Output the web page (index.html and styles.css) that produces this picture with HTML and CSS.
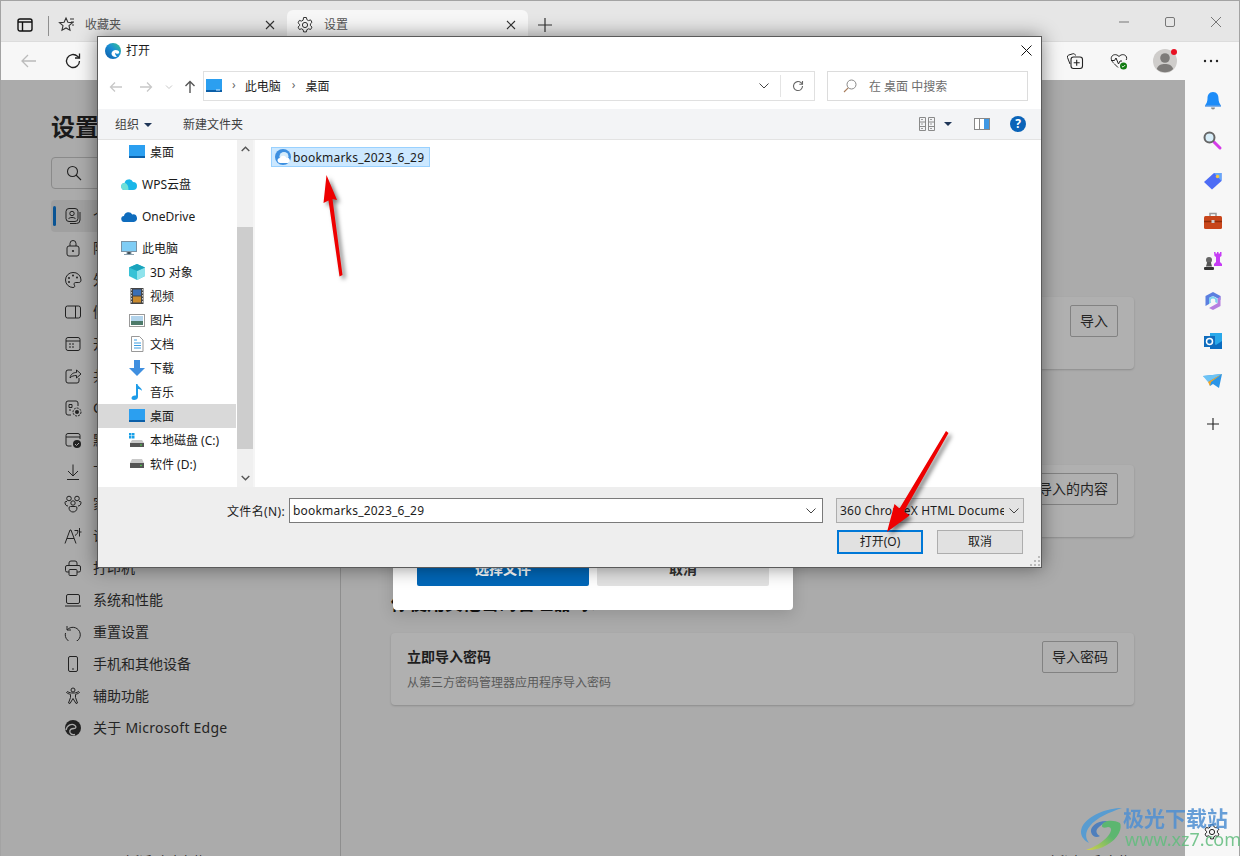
FILE: index.html
```html
<!DOCTYPE html>
<html lang="zh-CN">
<head>
  <meta charset="UTF-8" />
  <title>设置</title>
  <link rel="stylesheet" href="styles.css">
</head>
<body>
  <div class="app">
    <div class="tabbar">
      <svg class="tab-actions" width="16" height="16" viewBox="0 0 16 16"><rect x="1" y="2" width="14" height="12" rx="2" fill="none" stroke="#111" stroke-width="1.4"/><path d="M1 5h14M5.500 5v9" stroke="#111" stroke-width="1.400"/></svg>
      <span class="tab-sep"></span>
      <div class="tab">
        <svg width="18" height="18" viewBox="0 0 18 18"><path d="M8 2l1.900 4.300 4.600.4-3.500 3 1 4.500L8 11.900l-4 2.300 1-4.500-3.500-3 4.600-.4z" fill="none" stroke="#333" stroke-width="1.100"/><path d="M12 3h4M13 6h3M14 9h2" stroke="#333"/></svg>
        <span class="tab-title">收藏夹</span>
        <svg class="tab-close" width="10" height="10" viewBox="0 0 10 10"><path d="M1 1l8 8M9 1l-8 8" stroke="#333" stroke-width="1.100"/></svg>
      </div>
      <div class="tab tab-active">
        <svg width="18" height="18" viewBox="0 0 18 18"><circle cx="9" cy="9" r="2.600" fill="none" stroke="#333"/><path d="M7.600 1.500h2.800l.5 2.200 1.600.9 2.100-.7 1.400 2.400-1.600 1.500v1.800l1.600 1.500-1.400 2.400-2.100-.7-1.600.9-.5 2.200H7.600l-.5-2.200-1.600-.9-2.100.7-1.400-2.400 1.600-1.500V8.300L2 6.800l1.400-2.400 2.100.7 1.600-.9z" fill="none" stroke="#333"/></svg>
        <span class="tab-title">设置</span>
        <svg class="tab-close" width="10" height="10" viewBox="0 0 10 10"><path d="M1 1l8 8M9 1l-8 8" stroke="#333" stroke-width="1.100"/></svg>
      </div>
      <svg class="tab-new" width="16" height="16" viewBox="0 0 16 16"><path d="M8 1v14M1 8h14" stroke="#333" stroke-width="1.200"/></svg>
      <div class="win-controls">
        <svg width="12" height="12" viewBox="0 0 12 12"><path d="M1 6h10" stroke="#777"/></svg>
        <svg width="12" height="12" viewBox="0 0 12 12"><rect x="1.500" y="1.500" width="9" height="9" rx="1.500" fill="none" stroke="#777"/></svg>
        <svg width="12" height="12" viewBox="0 0 12 12"><path d="M1 1l10 10M11 1L1 11" stroke="#777"/></svg>
      </div>
    </div>

    <div class="toolbar">
      <svg class="tool-back" width="18" height="18" viewBox="0 0 18 18"><path d="M16 9H2M8 3L2 9l6 6" fill="none" stroke="#bbb" stroke-width="1.300"/></svg>
      <svg class="tool-reload" width="18" height="18" viewBox="0 0 18 18"><path d="M15.500 9a6.500 6.500 0 1 1-2-4.700L15.500 6" fill="none" stroke="#222" stroke-width="1.300"/><path d="M15.500 1.500V6H11" fill="none" stroke="#222" stroke-width="1.300"/></svg>
      <div class="tool-right">
        <svg width="18" height="18" viewBox="0 0 18 18"><path d="M4 12L1.500 5.500a2 2 0 0 1 1.300-2.500l4-1.200c1.400-.4 2.300.3 2.700 1.700" fill="none" stroke="#222"/><rect x="5" y="5" width="11.500" height="11.500" rx="2.500" fill="#f7f7f7" stroke="#222" stroke-width="1.100"/><path d="M10.700 7.800v6M7.700 10.800h6" stroke="#222" stroke-width="1.100"/></svg>
        <svg width="18" height="18" viewBox="0 0 18 18"><path d="M4 11.500C1 8.500 1 6.500 1.500 5c1-2.500 4.800-3.500 7.500-.5 2.700-3 6.500-2 7.500.5.300 1 .2 2-.3 3" fill="none" stroke="#222"/><path d="M1 8.500h3.500L6 6l2.500 6 1.500-3h2" fill="none" stroke="#222"/><path d="M4.500 12l3.500 3.500" stroke="#222"/><circle cx="13.500" cy="14" r="3.500" fill="#107c10"/><path d="M11.800 14l1.200 1.200 2.200-2.200" fill="none" stroke="#fff" stroke-width=".9"/></svg>
        <span class="avatar">
          <svg width="24" height="24" viewBox="0 0 24 24"><circle cx="12" cy="12" r="12" fill="#cfcdcb"/><circle cx="12" cy="9" r="4.800" fill="#7d7b79"/><path d="M3.800 20c1-3.700 4.500-5 8.200-5s7.200 1.300 8.200 5a12 12 0 0 1-16.400 0z" fill="#7d7b79"/></svg>
          <i class="avatar-dot"></i>
        </span>
        <svg width="18" height="18" viewBox="0 0 18 18"><circle cx="3" cy="9" r="1.200" fill="#222"/><circle cx="9" cy="9" r="1.200" fill="#222"/><circle cx="15" cy="9" r="1.200" fill="#222"/></svg>
      </div>
    </div>

    <div class="main">
      <aside class="sidebar">
        <h1 class="side-title">设置</h1>
        <div class="side-search">
          <svg width="16" height="16" viewBox="0 0 16 16"><circle cx="6.500" cy="6.500" r="5" fill="none" stroke="#222" stroke-width="1.100"/><path d="M10 10l5 5" stroke="#222" stroke-width="1.100"/></svg>
        </div>
        <ul class="side-nav">
          <li class="side-item side-item-on">
            <svg width="18" height="18" viewBox="0 0 18 18"><rect x="2" y="1.500" width="12" height="13" rx="3" fill="none" stroke="#222"/><circle cx="8" cy="6.500" r="2.200" fill="none" stroke="#222"/><path d="M4.500 12c.5-2 6.500-2 7 0M16 5v8a3.500 3.500 0 0 1-3.500 3.500H6" fill="none" stroke="#222"/></svg>
            <span>个人资料</span>
          </li>
          <li class="side-item">
            <svg width="18" height="18" viewBox="0 0 18 18"><rect x="3" y="7" width="12" height="10" rx="2" fill="none" stroke="#222"/><path d="M6 7V4.500a3 3 0 0 1 6 0V7" fill="none" stroke="#222"/><circle cx="9" cy="12" r="1.100" fill="#222"/></svg>
            <span>隐私、搜索和服务</span>
          </li>
          <li class="side-item">
            <svg width="18" height="18" viewBox="0 0 18 18"><path d="M9 1.500a7.500 7.500 0 1 0 0 15c2 0 2-1.500 1.300-2.500-.8-1.300 0-2.500 1.500-2.500h3c1.500 0 2.200-1 2.200-2.500A7.500 7.500 0 0 0 9 1.500z" fill="none" stroke="#222"/><circle cx="5" cy="7" r="1" fill="#222"/><circle cx="9" cy="4.500" r="1" fill="#222"/><circle cx="13" cy="6.500" r="1" fill="#222"/><circle cx="5" cy="11" r="1" fill="#222"/></svg>
            <span>外观</span>
          </li>
          <li class="side-item">
            <svg width="18" height="18" viewBox="0 0 18 18"><rect x="1.500" y="3" width="15" height="12" rx="2" fill="none" stroke="#222"/><path d="M11.500 3v12" stroke="#222"/></svg>
            <span>侧栏</span>
          </li>
          <li class="side-item">
            <svg width="18" height="18" viewBox="0 0 18 18"><rect x="2" y="2.500" width="14" height="13" rx="2" fill="none" stroke="#222"/><path d="M2 6h14M5 9h2M8 9h2M5 12h2M8 12h2" stroke="#222"/></svg>
            <span>开始、主页和新建标签页</span>
          </li>
          <li class="side-item">
            <svg width="18" height="18" viewBox="0 0 18 18"><path d="M8 3H4a2 2 0 0 0-2 2v9a2 2 0 0 0 2 2h9a2 2 0 0 0 2-2v-3" fill="none" stroke="#222"/><path d="M6 11c.5-4 3.500-5.500 6.500-5.500V3L17 7l-4.500 4V8.500C10 8.500 7.500 9 6 11z" fill="none" stroke="#222"/></svg>
            <span>共享、复制和粘贴</span>
          </li>
          <li class="side-item">
            <svg width="18" height="18" viewBox="0 0 18 18"><path d="M7 16H4a2 2 0 0 1-2-2V4a2 2 0 0 1 2-2h8a2 2 0 0 1 2 2v3" fill="none" stroke="#222"/><path d="M5 5.500h3v3H5zM5 11h2" fill="none" stroke="#222"/><circle cx="13" cy="13" r="2" fill="#222"/><circle cx="13" cy="13" r="4" fill="none" stroke="#222" stroke-dasharray="2 1"/></svg>
            <span>Cookie 和网站权限</span>
          </li>
          <li class="side-item">
            <svg width="18" height="18" viewBox="0 0 18 18"><path d="M7.500 15H4a2 2 0 0 1-2-2V4.500a2 2 0 0 1 2-2h10a2 2 0 0 1 2 2V8M2 6h14" fill="none" stroke="#222"/><circle cx="13" cy="13" r="4" fill="#222"/><path d="M11 13l1.500 1.500L15 12" fill="none" stroke="#ababab"/></svg>
            <span>默认浏览器</span>
          </li>
          <li class="side-item">
            <svg width="18" height="18" viewBox="0 0 18 18"><path d="M9 1.500v11M4 8l5 5 5-5M3 16.500h12" fill="none" stroke="#222"/></svg>
            <span>下载</span>
          </li>
          <li class="side-item">
            <svg width="18" height="18" viewBox="0 0 18 18"><circle cx="5" cy="3.500" r="2.300" fill="none" stroke="#222"/><circle cx="13" cy="3.500" r="2.300" fill="none" stroke="#222"/><circle cx="9" cy="8" r="2.200" fill="none" stroke="#222"/><path d="M3 6.500H2a1 1 0 0 0-1 1C1 10 2.500 11 4 11M15 6.500h1a1 1 0 0 1 1 1c0 2.500-1.500 3.500-3 3.500M5 13a1.500 1.500 0 0 1 1.500-1.500h5A1.500 1.500 0 0 1 13 13c0 2.500-2 4-4 4s-4-1.500-4-4z" fill="none" stroke="#222"/></svg>
            <span>家庭安全</span>
          </li>
          <li class="side-item">
            <svg width="18" height="18" viewBox="0 0 18 18"><path d="M1 16.500L6 3h1l5 13.500M3 11.500h7" fill="none" stroke="#222"/><path d="M10.500 3.500h3.500c0 2.500-1.200 4-3 5M15.500 1v8.500M15.500 5h2" fill="none" stroke="#222"/></svg>
            <span>语言</span>
          </li>
          <li class="side-item">
            <svg width="18" height="18" viewBox="0 0 18 18"><path d="M5 6.500V4a2 2 0 0 1 2-2h4a2 2 0 0 1 2 2v2.500M5 13H3a1.500 1.500 0 0 1-1.500-1.500V8A1.500 1.500 0 0 1 3 6.500h12A1.500 1.500 0 0 1 16.500 8v3.500A1.500 1.500 0 0 1 15 13h-2" fill="none" stroke="#222"/><rect x="5" y="10.500" width="8" height="6" rx="1" fill="none" stroke="#222"/></svg>
            <span>打印机</span>
          </li>
          <li class="side-item">
            <svg width="18" height="18" viewBox="0 0 18 18"><rect x="2.500" y="3.500" width="13" height="9" rx="1.500" fill="none" stroke="#222"/><path d="M1 15h16" stroke="#222"/></svg>
            <span>系统和性能</span>
          </li>
          <li class="side-item">
            <svg width="18" height="18" viewBox="0 0 18 18"><path d="M3 3v4h4" fill="none" stroke="#222"/><path d="M3.200 6.800A7.500 7.500 0 1 1 1.500 10" fill="none" stroke="#222"/></svg>
            <span>重置设置</span>
          </li>
          <li class="side-item">
            <svg width="18" height="18" viewBox="0 0 18 18"><rect x="4.500" y="1.500" width="9" height="15" rx="1.500" fill="none" stroke="#222"/><path d="M8 14h2" stroke="#222"/></svg>
            <span>手机和其他设备</span>
          </li>
          <li class="side-item">
            <svg width="18" height="18" viewBox="0 0 18 18"><circle cx="9" cy="3" r="2" fill="none" stroke="#222"/><path d="M2.500 5.500c2 1.500 3 1.500 4 2v3L4.500 16l1.500.5 3-5 3 5 1.500-.5-2-5.500v-3c1-.5 2-.5 4-2l-1-1c-2 1.500-3.500 1.500-5.500 1.500s-3.500 0-5.500-1.500z" fill="none" stroke="#222"/></svg>
            <span>辅助功能</span>
          </li>
          <li class="side-item">
            <svg width="18" height="18" viewBox="0 0 18 18"><circle cx="9" cy="9" r="8" fill="#222"/><path d="M2 11c1-5 6-7 9-4.500 1.500 1.300 1 3-1 3-2.500 0-5 1-4 4 .8 2 3 2.500 5 2" fill="none" stroke="#ababab" stroke-width="1.300"/></svg>
            <span class="latin">关于 Microsoft Edge</span>
          </li>
        </ul>
        <div class="side-foot">隐私和安全条款</div>
      </aside>

      <section class="content">
        <div class="card card-first">
          <div class="card-text"></div>
          <button class="card-btn">导入</button>
        </div>
        <h2 class="sec-title sec-hidden">导入浏览器数据</h2>
        <div class="card">
          <div class="card-text"></div>
          <button class="card-btn">选择要导入的内容</button>
        </div>
        <h2 class="sec-title">你使用其他密码管理器吗？</h2>
        <div class="card">
          <div class="card-text">
            <div class="card-name">立即导入密码</div>
            <div class="card-desc">从第三方密码管理器应用程序导入密码</div>
          </div>
          <button class="card-btn">导入密码</button>
        </div>
        <div class="content-foot">隐私声明和条款</div>

        <div class="modal">
          <button class="modal-btn modal-btn-main">选择文件</button>
          <button class="modal-btn">取消</button>
        </div>
      </section>

      <aside class="rail">
        <svg class="rail-icon" width="20" height="20" viewBox="0 0 20 20"><path d="M10 1c4 0 5.500 3 5.500 6.500 0 3 1 5 2.500 7H2c1.500-2 2.500-4 2.500-7C4.500 4 6 1 10 1z" fill="#1d8cf8"/><path d="M2 14.500h16v1H2z" fill="#0b6fe0"/><path d="M8 16.500h4a2 2 0 0 1-4 0z" fill="#888"/></svg>
        <svg class="rail-icon" width="20" height="20" viewBox="0 0 20 20"><path d="M11 11l6 6" stroke="#d53be8" stroke-width="3" stroke-linecap="round"/><circle cx="6.500" cy="6.500" r="5" fill="#d8eef9" stroke="#666" stroke-width="2"/></svg>
        <svg class="rail-icon" width="20" height="20" viewBox="0 0 20 20"><path d="M1 11L11 2h7.500v8L9 18.500z" fill="#4d6cf5"/><path d="M11 2h7.500v8z" fill="#66a8f8"/><circle cx="14.500" cy="5.500" r="1.700" fill="#f5c542"/></svg>
        <svg class="rail-icon" width="20" height="20" viewBox="0 0 20 20"><path d="M7 5V2.500h6V5" fill="none" stroke="#999" stroke-width="1.500"/><rect x="1" y="5" width="18" height="13" rx="1.500" fill="#c8451a"/><path d="M1 10.500h18" stroke="#8f2c0b" stroke-width="1.500"/><rect x="8.500" y="9" width="3" height="3" fill="#ccc"/></svg>
        <svg class="rail-icon" width="20" height="20" viewBox="0 0 20 20"><path d="M11 1h1.500v1.500H14V1h1.500v1.500H17V1h1.500v4l-1.500 1v5l2 2v2h-8v-2l2-2V6l-1.500-1z" fill="#c63cf5"/><circle cx="6" cy="9" r="3" fill="#666"/><path d="M4.200 11h3.600l1.200 4.500H3z" fill="#555"/><rect x="1" y="16" width="10" height="3" rx="1" fill="#333"/></svg>
        <svg class="rail-icon" width="20" height="20" viewBox="0 0 20 20"><path d="M10 1l7.500 4v4l-5-2.800L10 5 6 7v6L2.500 15V5z" fill="#5b7fe0"/><path d="M17.500 5v10L10 19l-4-2 5-2.800 3.500-2V8z" fill="#b67fe0"/><path d="M6 7l4-2 4.500 3v4.200L10 10 6 13z" fill="#7fd3f0"/><circle cx="10" cy="10" r="2.400" fill="#f7f7f7"/></svg>
        <svg class="rail-icon" width="20" height="20" viewBox="0 0 20 20"><path d="M7 2h12v16H7z" fill="#28a8ea"/><path d="M7 10l6 4 6-4v8H7z" fill="#0a6cc0"/><rect x="1" y="5" width="11" height="11" fill="#0f6cbd"/><circle cx="6.500" cy="10.500" r="3" fill="none" stroke="#fff" stroke-width="1.500"/></svg>
        <svg class="rail-icon" width="20" height="20" viewBox="0 0 20 20"><path d="M0 5l19-2-3 14-6-4-3 2-2-6z" fill="#2a95e8"/><path d="M0 5l19-2-14 8z" fill="#6cc3f5"/><path d="M19 3L5 11l2 4 1-4z" fill="#f5a623"/></svg>
        <svg class="rail-icon rail-plus" width="14" height="14" viewBox="0 0 14 14"><path d="M7 1v12M1 7h12" stroke="#222" stroke-width="1.100"/></svg>
        <svg class="rail-gear" width="18" height="18" viewBox="0 0 18 18"><circle cx="9" cy="9" r="2.600" fill="none" stroke="#222"/><path d="M7.600 1.500h2.800l.5 2.200 1.600.9 2.100-.7 1.400 2.400-1.600 1.500v1.800l1.600 1.500-1.400 2.400-2.100-.7-1.600.9-.5 2.200H7.600l-.5-2.200-1.600-.9-2.100.7-1.400-2.400 1.600-1.500V8.300L2 6.800l1.400-2.400 2.100.7 1.600-.9z" fill="none" stroke="#222"/></svg>
      </aside>
    </div>
  </div>

  <!-- 打开文件对话框 -->
  <div class="dialog">
    <div class="dlg-title">
      <svg width="16" height="16" viewBox="0 0 16 16"><defs><linearGradient id="edgeFill" x1="1" y1="0" x2="0" y2="1"><stop offset="0" stop-color="#39c78a"/><stop offset=".45" stop-color="#1b8fd6"/><stop offset="1" stop-color="#0c59a4"/></linearGradient></defs><circle cx="8" cy="8" r="8" fill="url(#edgeFill)"/><path d="M6.500 10.500c.3-3 4-4.500 6.500-3 1.500 1 1.500 2.500.5 3-1.500.7-2.500 0-3-.7-.7.5-.3 2.500 1.500 4-3 .5-5.700-1-5.500-3.300z" fill="#fff"/></svg>
      <span>打开</span>
      <svg class="dlg-close" width="11" height="11" viewBox="0 0 11 11"><path d="M.5.500l10 10M10.500.500l-10 10" stroke="#111"/></svg>
    </div>

    <div class="dlg-nav">
      <div class="nav-arrows">
        <svg width="14" height="14" viewBox="0 0 14 14"><path d="M13 7H1.500M6 2.500L1.500 7 6 11.500" fill="none" stroke="#c8c8c8" stroke-width="1.300"/></svg>
        <svg width="14" height="14" viewBox="0 0 14 14"><path d="M1 7h11.500M8 2.500L12.500 7 8 11.500" fill="none" stroke="#c8c8c8" stroke-width="1.300"/></svg>
        <svg class="nav-down" width="8" height="8" viewBox="0 0 8 8"><path d="M1 2.500l3 3 3-3" fill="none" stroke="#c8c8c8"/></svg>
        <svg width="14" height="14" viewBox="0 0 14 14"><path d="M7 13V1.500M2.500 6L7 1.500 11.500 6" fill="none" stroke="#555" stroke-width="1.400"/></svg>
      </div>
      <div class="addr">
        <svg width="16" height="14" viewBox="0 0 16 14"><rect width="16" height="12" fill="#2b9ff0"/><rect y="11" width="16" height="2" fill="#0b5fa8"/><path d="M10 11h4" stroke="#cfe9ff"/></svg>
        <span class="crumb-sep">›</span>
        <span class="crumb">此电脑</span>
        <span class="crumb-sep">›</span>
        <span class="crumb">桌面</span>
        <svg class="addr-chev" width="10" height="6" viewBox="0 0 10 6"><path d="M.5.500L5 5l4.500-4.500" fill="none" stroke="#444"/></svg>
        <span class="addr-div"></span>
        <svg class="addr-reload" width="12" height="12" viewBox="0 0 12 12"><path d="M10.500 6A4.500 4.500 0 1 1 9 2.700L10.500 4" fill="none" stroke="#666" stroke-width="1.100"/><path d="M10.500 1v3.200H7.300" fill="none" stroke="#666" stroke-width="1.100"/></svg>
      </div>
      <div class="dlg-search">
        <svg width="14" height="14" viewBox="0 0 14 14"><circle cx="8.500" cy="5.500" r="4.500" fill="none" stroke="#888"/><path d="M5.200 8.800L1 13" stroke="#a87b5a" stroke-width="1.100"/></svg>
        <span>在 桌面 中搜索</span>
      </div>
    </div>

    <div class="dlg-tools">
      <span class="tool-text">组织<i class="caret"></i></span>
      <span class="tool-text tool-new">新建文件夹</span>
      <div class="tools-right">
        <svg width="16" height="16" viewBox="0 0 16 16"><path d="M.5 1.500h6v13h-6zM9.500 1.500h6v13h-6zM.5 6h6M.5 10.500h6M9.500 6h6M9.500 10.500h6" fill="none" stroke="#8a8a8a"/><path d="M2.500 3.500h1M2.500 8h1M2.500 12.500h1M11.500 3.500h1M11.500 8h1M11.500 12.500h1" stroke="#444"/></svg>
        <i class="caret caret-view"></i>
        <svg class="pane-icon" width="16" height="12" viewBox="0 0 16 12"><rect x=".5" y=".5" width="15" height="11" fill="#fff" stroke="#888"/><rect x="10" y="1" width="5" height="10" fill="#3f97e3"/><path d="M5.500 1v10" stroke="#888"/></svg>
        <span class="help">?</span>
      </div>
    </div>

    <div class="dlg-body">
      <ul class="tree">
        <li class="tree-row tree-sub">
          <svg width="16" height="14" viewBox="0 0 16 14"><rect width="16" height="12" fill="#2b9ff0"/><rect y="11" width="16" height="2" fill="#0b5fa8"/></svg>
          <span>桌面</span>
        </li>
        <li class="tree-row tree-top">
          <svg width="16" height="12" viewBox="0 0 16 12"><path d="M4 12a3.500 3.500 0 0 1-.5-7 4.500 4.500 0 0 1 8.500-1 4 4 0 0 1 0 8z" fill="#19b6e8"/><path d="M4 12a3.500 3.500 0 0 1-.5-7c2 0 4 2 4 7z" fill="#6fe0d8"/></svg>
          <span>WPS云盘</span>
        </li>
        <li class="tree-row tree-top">
          <svg width="16" height="11" viewBox="0 0 16 11"><path d="M3.500 11A3 3 0 0 1 3 5a4.500 4.500 0 0 1 8.300-1.500A3.800 3.800 0 0 1 13 11z" fill="#0f6cbd"/></svg>
          <span>OneDrive</span>
        </li>
        <li class="tree-row tree-top">
          <svg width="16" height="15" viewBox="0 0 16 15"><rect x=".5" y=".5" width="15" height="10" fill="#7fcdf5" stroke="#7a93a5"/><path d="M6 11h4v2H6zM3 13.500h10" stroke="#8aa0ae"/></svg>
          <span>此电脑</span>
        </li>
        <li class="tree-row tree-sub">
          <svg width="16" height="16" viewBox="0 0 16 16"><path d="M8 0l8 3.500V12l-8 4-8-4V3.500z" fill="#37c2d6"/><path d="M8 7l8-3.500V12l-8 4z" fill="#8fe3ec"/><path d="M8 0l8 3.500L8 7 0 3.500z" fill="#1ba3bc"/></svg>
          <span>3D 对象</span>
        </li>
        <li class="tree-row tree-sub">
          <svg width="16" height="16" viewBox="0 0 16 16"><rect x="1.500" width="13" height="16" fill="#444"/><rect x="4" y="1.500" width="8" height="6" fill="#3b6fb5"/><rect x="4" y="8.500" width="8" height="6" fill="#c98a2e"/><path d="M2.500 1v14M13.500 1v14" stroke="#ccc" stroke-dasharray="1.500 1.500"/></svg>
          <span>视频</span>
        </li>
        <li class="tree-row tree-sub">
          <svg width="16" height="13" viewBox="0 0 16 13"><rect x=".5" y=".5" width="15" height="12" fill="#fff" stroke="#999"/><rect x="2" y="2" width="12" height="5" fill="#b3d4ec"/><rect x="2" y="7" width="12" height="4" fill="#4d7a6a"/></svg>
          <span>图片</span>
        </li>
        <li class="tree-row tree-sub">
          <svg width="14" height="16" viewBox="0 0 14 16"><path d="M1.500.500h8l3.500 3.500v11.500H1.500z" fill="#fff" stroke="#999"/><path d="M4 4h3M4 7h7M4 9.500h7M4 12h7" stroke="#3c9ce0"/></svg>
          <span>文档</span>
        </li>
        <li class="tree-row tree-sub">
          <svg width="16" height="16" viewBox="0 0 16 16"><path d="M5 0h6v8h5l-8 8-8-8h5z" fill="#3f8fe0"/></svg>
          <span>下载</span>
        </li>
        <li class="tree-row tree-sub">
          <svg width="14" height="16" viewBox="0 0 14 16"><path d="M6 0h1.500c.3 3 4.500 3.500 4.500 7-1-1.500-3-2-4-2v8c0 2-2 3-4 3-1.500 0-2.500-.8-2.500-2 0-1.500 2-3 4.500-2.500z" fill="#1e9ce8"/></svg>
          <span>音乐</span>
        </li>
        <li class="tree-row tree-sub tree-on">
          <svg width="16" height="14" viewBox="0 0 16 14"><rect width="16" height="12" fill="#2b9ff0"/><rect y="11" width="16" height="2" fill="#0b5fa8"/></svg>
          <span>桌面</span>
        </li>
        <li class="tree-row tree-sub">
          <svg width="16" height="14" viewBox="0 0 16 14"><path d="M0 0h2.500v2.500H0zM3 0h2.500v2.500H3zM0 3h2.500v2.500H0zM3 3h2.500v2.500H3z" fill="#18a0e8"/><path d="M3 7h10l2 3H1z" fill="#c9c9c9"/><rect x="1" y="10" width="14" height="4" fill="#555"/><circle cx="12" cy="12" r=".8" fill="#4ce24c"/></svg>
          <span>本地磁盘 (C:)</span>
        </li>
        <li class="tree-row tree-sub">
          <svg width="16" height="10" viewBox="0 0 16 10"><path d="M3 0h10l2 4H1z" fill="#c9c9c9"/><rect x="1" y="4" width="14" height="5" fill="#555"/><circle cx="12" cy="6.500" r=".8" fill="#4ce24c"/></svg>
          <span>软件 (D:)</span>
        </li>
      </ul>
      <div class="scroll">
        <svg class="scroll-arrow" width="9" height="6" viewBox="0 0 9 6"><path d="M.7 5L4.500 1.200 8.300 5" fill="none" stroke="#555" stroke-width="1.400"/></svg>
        <div class="scroll-track"><div class="scroll-thumb"></div></div>
        <svg class="scroll-arrow" width="9" height="6" viewBox="0 0 9 6"><path d="M.7 1l3.800 3.800L8.300 1" fill="none" stroke="#555" stroke-width="1.400"/></svg>
      </div>
      <div class="files">
        <div class="file-item">
          <svg width="16" height="16" viewBox="0 0 16 16"><circle cx="8" cy="8" r="8" fill="#3d8fe0"/><circle cx="9" cy="7.500" r="4.500" fill="#d5ecfb"/><path d="M5 14a2.500 2.500 0 0 1 0-5 3.500 3.500 0 0 1 6.500 0 2.500 2.500 0 0 1 1.500 5z" fill="#fff"/></svg>
          <span>bookmarks_2023_6_29</span>
        </div>
      </div>
    </div>

    <div class="dlg-foot">
      <div class="foot-row">
        <label class="foot-label">文件名(N):</label>
        <div class="foot-input">
          <span>bookmarks_2023_6_29</span>
          <svg width="10" height="6" viewBox="0 0 10 6"><path d="M.5.500L5 5l4.500-4.500" fill="none" stroke="#444"/></svg>
        </div>
        <div class="foot-filter">
          <span>360 ChromeX HTML Document</span>
          <svg width="10" height="6" viewBox="0 0 10 6"><path d="M.5.500L5 5l4.500-4.500" fill="none" stroke="#444"/></svg>
        </div>
      </div>
      <div class="foot-row foot-actions">
        <button class="dlg-btn dlg-btn-on">打开(O)</button>
        <button class="dlg-btn">取消</button>
      </div>
      <svg class="grip" width="10" height="10" viewBox="0 0 10 10"><path d="M8 0h2v2H8zM4 4h2v2H4zM8 4h2v2H8zM0 8h2v2H0zM4 8h2v2H4zM8 8h2v2H8z" fill="#bbb"/></svg>
    </div>
  </div>

  <!-- 截图上的红色箭头 -->
  <svg class="arrows" width="1240" height="856" viewBox="0 0 1240 856">
    <path d="M326.500 175L337 200 332.500 199 342.500 275 339.500 276.500 328.500 200.500 323.500 203z" fill="#ee0000"/>
    <path d="M887 532L894.500 504 899.500 508.500 946 431 948.500 433 904 511.500 909.500 515.500z" fill="#ee0000"/>
  </svg>

  <!-- 水印 -->
  <div class="watermark">
    <svg width="44" height="44" viewBox="0 0 44 44"><defs><linearGradient id="wmGreen" x1="1" y1="0" x2="0" y2="1"><stop offset=".4" stop-color="#4fb866"/><stop offset="1" stop-color="#dcd83a"/></linearGradient></defs><path d="M42 1C28 1 8 8 2 20c-3 7 1 13 7 16-4-5-4-11 1-17C16 11 30 5 42 1z" fill="#4a9ad8"/><path d="M28 14c-10-1-18 5-17 11 1 5 6 6 9 4-4-2-5-6-1-9 3-3 7-5 9-6z" fill="#3f78c0"/><path d="M40 16c-8-4-18-2-18 3 0 2 3 2 6 1 4 0 4 4 0 9-5 6-13 11-22 14 14 1 28-7 33-17 2-4 2-8 1-10z" fill="url(#wmGreen)"/></svg>
    <div class="wm-text">
      <div class="wm-name">极光下载站</div>
      <div class="wm-url">www.xz7.com</div>
    </div>
  </div>
</body>
</html>
```

FILE: styles.css
```css
:root {
  --page: #ababab;
  --card: #b0b0b0;
  --bar: #f7f7f7;
  --ink: #1d1d1d;
}

* {
  box-sizing: border-box;
}

html, body {
  margin: 0;
  height: 100%;
  overflow: hidden;
}

body {
  font-family: "Noto Sans", "Noto Sans CJK SC", sans-serif;
  font-size: 12px;
  color: var(--ink);
}

ul {
  list-style: none;
  margin: 0;
  padding: 0;
}

/* browser frame */
.app {
  width: 1240px;
  height: 856px;
  display: flex;
  flex-direction: column;
  border: 1px solid #a3a3a3;
  border-bottom: none;
  overflow: hidden;
}

.tabbar {
  height: 40px;
  flex: none;
  background: #e6e6e6;
  display: flex;
  align-items: flex-end;
  padding-left: 16px;
  position: relative;
}

.tab-actions {
  margin-bottom: 8px;
}

.tab-sep {
  width: 1px;
  height: 20px;
  background: #8f8f8f;
  margin: 0 0 5px 15px;
}

.tab {
  width: 241px;
  height: 31px;
  display: flex;
  align-items: center;
  padding: 0 12px 2px 9px;
  color: #555;
  font-size: 12px;
}

.tab:not(.tab-active) {
  width: 238px;
}

.tab-active {
  background: #f7f7f7;
  border-radius: 6px 6px 0 0;
  color: #555;
}

.tab-title {
  margin-left: 9px;
  flex: 1;
  line-height: 16px;
}

.tab-active .tab-title {
  margin-left: 10px;
}

.tab-new {
  margin: 0 0 8px 9px;
}

.win-controls {
  position: absolute;
  top: 15px;
  right: 17px;
  display: flex;
  gap: 34px;
}

.toolbar {
  height: 39px;
  flex: none;
  background: var(--bar);
  display: flex;
  align-items: center;
  border-top: 1px solid #dcdcdc;
}

.tool-back {
  margin-left: 19px;
}

.tool-reload {
  margin-left: 26px;
}

.tool-right {
  margin-left: auto;
  display: flex;
  align-items: center;
  gap: 26px;
  padding-right: 19px;
}

.avatar {
  position: relative;
  width: 24px;
  height: 24px;
  margin: 0 -1px;
}

.avatar-dot {
  position: absolute;
  top: 0;
  right: 0;
  width: 6px;
  height: 6px;
  border-radius: 50%;
  background: #e81123;
}

/* settings page, dimmed by the dialog */
.main {
  flex: 1;
  min-height: 0;
  display: flex;
  background: var(--page);
}

.sidebar {
  width: 340px;
  flex: none;
  border-right: 1px solid #8e8e8e;
  padding: 30px 0 0 50px;
}

.side-title {
  margin: 0;
  font-size: 24px;
  line-height: 34px;
  font-weight: 700;
  color: #1a1a1a;
}

.side-search {
  margin-top: 13px;
  width: 270px;
  height: 32px;
  border: 1px solid #8a8a8a;
  border-radius: 4px;
  display: flex;
  align-items: center;
  padding-left: 14px;
}

.side-nav {
  margin-top: 11px;
}

.side-item {
  height: 32px;
  display: flex;
  align-items: center;
  gap: 11px;
  padding-left: 13px;
  font-size: 14px;
  line-height: 20px;
  color: #242424;
  border-radius: 4px;
  position: relative;
  width: 270px;
}

.side-item svg {
  flex: none;
}

.latin {
  letter-spacing: 0.25px;
}

.side-item-on {
  background: #a0a0a0;
}

.side-item-on::before {
  content: "";
  position: absolute;
  left: 2px;
  top: 6px;
  width: 3px;
  height: 20px;
  border-radius: 2px;
  background: #0a5494;
}

.side-foot {
  margin-top: 109px;
  padding-left: 70px;
  font-size: 12px;
  line-height: 18px;
  color: #222;
}

.content {
  flex: 1;
  min-width: 0;
  padding: 217px 51px 0 50px;
  position: relative;
}

.card {
  height: 72px;
  background: var(--card);
  border-radius: 4px;
  box-shadow: 0 1px 2px rgba(0, 0, 0, 0.18);
  display: flex;
  justify-content: space-between;
  padding: 8px 16px;
}

.card-name {
  margin-top: 6px;
  font-size: 14px;
  line-height: 20px;
  font-weight: 700;
}

.card-desc {
  margin-top: 7px;
  font-size: 12px;
  line-height: 18px;
  color: #595959;
}

.card-btn {
  height: 32px;
  padding: 0 9px 2px;
  font: inherit;
  font-size: 14px;
  color: #242424;
  background: transparent;
  border: 1px solid #828282;
  border-radius: 2px;
}

.sec-title {
  margin: 0;
  height: 96px;
  padding-top: 54px;
  font-size: 18px;
  line-height: 24px;
  font-weight: 700;
  color: #111;
}

.sec-hidden {
  color: transparent;
}

.content-foot {
  margin-top: 148px;
  padding-right: 4px;
  text-align: right;
  font-size: 12px;
  line-height: 18px;
  color: #222;
}

.modal {
  position: absolute;
  left: 52px;
  top: 300px;
  width: 400px;
  height: 230px;
  background: #fff;
  border-radius: 4px;
  box-shadow: 0 4px 16px rgba(0, 0, 0, 0.15);
  display: flex;
  align-items: flex-end;
  gap: 8px;
  padding: 0 24px 24px;
}

.modal-btn {
  width: 172px;
  height: 36px;
  border: none;
  border-radius: 2px;
  font: inherit;
  font-size: 14px;
  font-weight: 700;
  color: #333;
  background: #e2e2e2;
}

.modal-btn-main {
  background: #0067b8;
  color: #fff;
}

.rail {
  width: 54px;
  flex: none;
  background: var(--bar);
  display: flex;
  flex-direction: column;
  align-items: center;
  padding: 11px 0 15px;
}

.rail-icon {
  margin-bottom: 20px;
  margin-left: 1px;
}

.rail-plus {
  margin-top: 6px;
}

.rail-gear {
  margin-top: auto;
}

/* open file dialog */
.dialog {
  position: absolute;
  left: 97px;
  top: 36px;
  width: 945px;
  height: 532px;
  background: #fff;
  border: 1px solid #5a5a5a;
  box-shadow: 0 0 18px rgba(0, 0, 0, 0.45);
  display: flex;
  flex-direction: column;
}

.dlg-title {
  height: 34px;
  flex: none;
  display: flex;
  align-items: center;
  gap: 5px;
  padding: 0 9px 7px 7px;
  font-size: 12px;
  line-height: 16px;
}

.dlg-close {
  margin-left: auto;
}

.dlg-nav {
  height: 38px;
  flex: none;
  display: flex;
  gap: 12px;
  align-items: flex-start;
}

.nav-arrows {
  width: 105px;
  margin-right: -12px;
  height: 30px;
  flex: none;
  display: flex;
  align-items: center;
  padding: 2px 0 0 11px;
}

.nav-arrows svg:nth-child(2) {
  margin-left: 16px;
}

.nav-down {
  margin-left: 12px;
}

.nav-arrows svg:nth-child(4) {
  margin-left: 10px;
}

.addr {
  width: 612px;
  height: 30px;
  flex: none;
  border: 1px solid #e0e0e0;
  display: flex;
  align-items: center;
  padding-left: 2px;
  font-size: 12px;
  line-height: 16px;
}

.crumb {
  padding-top: 1px;
}

.crumb-sep {
  margin: 0 9px 2px 10px;
  color: #666;
}

.crumb + .crumb-sep {
  margin: 0 10px 2px 11px;
}

.addr-chev {
  margin-left: auto;
}

.addr-div {
  width: 1px;
  height: 22px;
  background: #e4e4e4;
  margin: 0 11px 0 11px;
}

.addr-reload {
  margin-right: 10px;
}

.dlg-search {
  width: 201px;
  height: 30px;
  flex: none;
  border: 1px solid #dcdcdc;
  display: flex;
  align-items: center;
  gap: 12px;
  padding-left: 15px;
  color: #6d6d6d;
  font-size: 12px;
  line-height: 16px;
}

.dlg-search span {
  padding-top: 2px;
}

.dlg-tools {
  height: 31px;
  flex: none;
  background: #f3f4f6;
  border-bottom: 1px solid #e3e3e3;
  display: flex;
  align-items: center;
  padding-left: 17px;
  color: #3f3f3f;
  line-height: 16px;
}

.tool-text {
  padding-top: 2px;
}

.tool-new {
  margin-left: 31px;
}

.caret {
  display: inline-block;
  width: 0;
  height: 0;
  margin-left: 5px;
  vertical-align: 2px;
  border: 4px solid transparent;
  border-top: 4px solid #1f3557;
  border-bottom: none;
}

.tools-right {
  margin-left: auto;
  display: flex;
  align-items: center;
  padding-right: 15px;
}

.caret-view {
  margin-left: 9px;
}

.pane-icon {
  margin-left: 22px;
}

.help {
  width: 16px;
  height: 16px;
  margin-left: 20px;
  border-radius: 50%;
  background: #0a63b8;
  color: #fff;
  font-size: 12px;
  line-height: 16px;
  font-weight: 700;
  text-align: center;
}

.dlg-body {
  flex: 1;
  min-height: 0;
  display: flex;
}

.tree {
  width: 139px;
  flex: none;
  overflow: hidden;
  padding-right: 1px;
}

.tree-row {
  height: 24px;
  display: grid;
  grid-template-columns: 16px 1fr;
  column-gap: 5px;
  align-items: center;
  justify-items: center;
  line-height: 16px;
  font-size: 12px;
  color: #1a1a1a;
  white-space: nowrap;
}

.tree-row span {
  justify-self: start;
  padding-top: 2px;
}

.tree-top {
  margin-top: 8px;
  padding-left: 23px;
}

.tree-sub {
  padding-left: 31px;
}

.tree-on {
  background: #d9d9d9;
}

.scroll {
  width: 16px;
  flex: none;
  background: #f0f0f0;
  display: flex;
  flex-direction: column;
  align-items: center;
}

.scroll-arrow {
  flex: none;
  margin: 6px 0;
}

.scroll-track {
  flex: 1;
  width: 100%;
  padding-top: 69px;
}

.scroll-thumb {
  height: 222px;
  background: #cdcdcd;
}

.files {
  flex: 1;
  min-width: 0;
  border-left: 2px solid #f5f5f5;
  padding: 7px 16px;
}

.file-item {
  width: 159px;
  height: 20px;
  background: #cce8ff;
  border: 1px solid #99d1ff;
  display: flex;
  align-items: center;
  gap: 2px;
  padding-left: 3px;
  font-size: 12px;
  line-height: 16px;
  white-space: nowrap;
  color: #1a1a1a;
}

.file-item span {
  padding-top: 2px;
  letter-spacing: 0.2px;
}

.dlg-foot {
  height: 80px;
  flex: none;
  background: #eeeeee;
  padding: 11px 17px 0 0;
  position: relative;
}

.foot-row {
  display: flex;
  justify-content: flex-end;
  align-items: center;
}

.foot-label {
  margin-right: 4px;
  padding-top: 2px;
  font-size: 12px;
  line-height: 16px;
  letter-spacing: 0.35px;
}

.foot-input {
  width: 534px;
  height: 25px;
  background: #fff;
  border: 1px solid #7a7a7a;
  margin-right: 13px;
  display: flex;
  align-items: center;
  justify-content: space-between;
  padding: 0 6px 0 3px;
  line-height: 16px;
}

.foot-input span {
  letter-spacing: 0.2px;
}

.foot-filter {
  width: 188px;
  height: 25px;
  background: #e3e3e3;
  border: 1px solid #adadad;
  display: flex;
  align-items: center;
  padding: 0 4px 0 3px;
  line-height: 16px;
}

.foot-filter span {
  flex: 1;
  min-width: 0;
  overflow: hidden;
  white-space: nowrap;
  letter-spacing: 0.2px;
}

.foot-filter svg {
  flex: none;
  margin-left: 5px;
}

.foot-actions {
  margin-top: 7px;
  gap: 14px;
  padding-right: 1px;
}

.dlg-btn {
  width: 86px;
  height: 24px;
  padding: 0;
  background: #e1e1e1;
  border: 1px solid #adadad;
  font: inherit;
  font-size: 12px;
  line-height: 16px;
  color: #1a1a1a;
}

.dlg-btn-on {
  border: 2px solid #0078d7;
}

.grip {
  position: absolute;
  right: 1px;
  bottom: 1px;
}

/* overlays */
.arrows {
  position: absolute;
  left: 0;
  top: 0;
  pointer-events: none;
  filter: drop-shadow(3px 3px 2px rgba(0, 0, 0, 0.5));
}

.watermark {
  position: absolute;
  left: 1080px;
  top: 807px;
  display: flex;
  opacity: 0.85;
  pointer-events: none;
}

.wm-text {
  margin-left: -1px;
}

.wm-name {
  font-size: 21px;
  line-height: 22px;
  font-weight: 700;
  color: #4f8fd2;
  white-space: nowrap;
}

.wm-url {
  font-size: 18px;
  line-height: 20px;
  color: #62bd7e;
  white-space: nowrap;
  margin-left: 2px;
}
```
